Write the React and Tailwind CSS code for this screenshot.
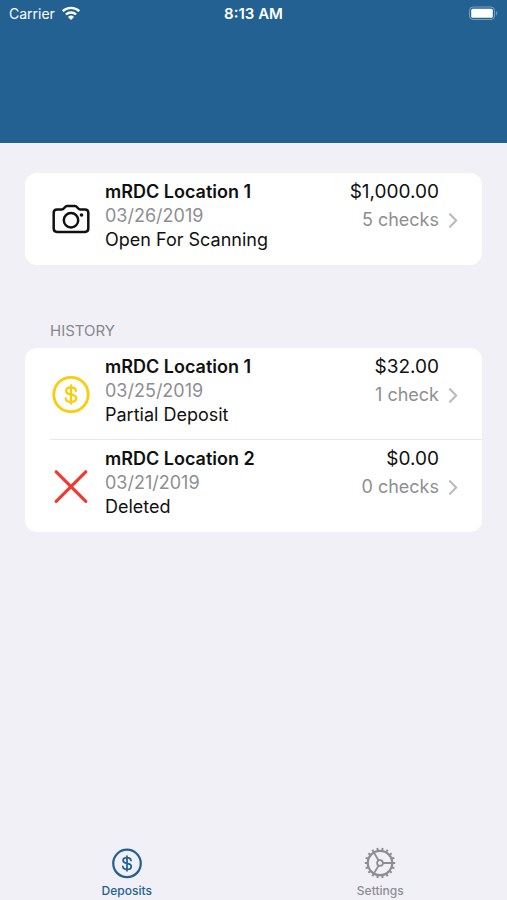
const openDeposits = [
  { id: 1, icon: 'camera', name: 'mRDC Location 1', date: '03/26/2019', status: 'Open For Scanning', amount: '$1,000.00', checks: '5 checks' },
]

const history = [
  { id: 2, icon: 'partial', name: 'mRDC Location 1', date: '03/25/2019', status: 'Partial Deposit', amount: '$32.00', checks: '1 check' },
  { id: 3, icon: 'deleted', name: 'mRDC Location 2', date: '03/21/2019', status: 'Deleted', amount: '$0.00', checks: '0 checks' },
]

function CameraIcon() {
  return (
    <svg className="size-10" viewBox="0 0 40 40" fill="none" stroke="#111" strokeWidth="2.5" strokeLinejoin="round" aria-hidden="true">
      <path d="M6 10.500h4.700c1 0 1.700-.4 2.300-1.200l.9-1.100c.6-.8 1.200-1.100 2.200-1.100h7.800c1 0 1.600.3 2.200 1.100l.9 1.100c.6.8 1.300 1.200 2.300 1.200h4.700c1.900 0 3.300 1.300 3.300 3.300v15.800c0 2-1.400 3.300-3.300 3.300H6c-1.900 0-3.300-1.300-3.300-3.300V13.800c0-2 1.400-3.300 3.300-3.300z" />
      <circle cx="20" cy="21.200" r="7.200" />
      <circle cx="30.500" cy="16" r="1.800" fill="#111" stroke="none" />
    </svg>
  )
}

function DollarIcon({ className, ringWidth }) {
  return (
    <svg className={className} viewBox="0 0 40 40" fill="none" stroke="currentColor" strokeLinecap="round" aria-hidden="true">
      <circle cx="20" cy="20.500" r="17.200" strokeWidth={ringWidth} />
      <path d="M20 11.300v18.400M25 16.900c-.3-2.200-2.200-3.500-5-3.500-2.900 0-4.900 1.400-4.900 3.600 0 1.900 1.400 2.800 3.900 3.300l2.200.5c2.700.6 4.100 1.600 4.100 3.500 0 2.300-2 3.700-5.200 3.700-3.100 0-5.100-1.400-5.400-3.700" strokeWidth="2.200" />
    </svg>
  )
}

function CrossIcon() {
  return (
    <svg className="size-10" viewBox="0 0 40 40" fill="none" stroke="#f23b30" strokeWidth="3.200" strokeLinecap="round" aria-hidden="true">
      <path d="M5.200 5.800l29.600 29.600M34.800 5.800L5.200 35.400" />
    </svg>
  )
}

function GearIcon() {
  const teeth = Array.from({ length: 18 }, (_, i) => i * 20)
  return (
    <svg className="size-8" viewBox="0 0 32 32" fill="none" stroke="currentColor" aria-hidden="true">
      <circle cx="16" cy="16" r="12.200" strokeWidth="2.200" />
      <circle cx="16" cy="16" r="2.900" strokeWidth="1.800" />
      <path d="M19 16h9M14.500 13.400L10 5.600M14.500 18.600L10 26.400" strokeWidth="1.900" />
      {teeth.map((angle) => (
        <path key={angle} d="M28.500 16h2.700" strokeWidth="2" transform={`rotate(${angle} 16 16)`} />
      ))}
    </svg>
  )
}

function WifiIcon() {
  return (
    <svg className="h-4 w-5" viewBox="0 0 20 16" fill="none" stroke="white" strokeWidth="2.400" aria-hidden="true">
      <path d="M1.700 5.200a12 12 0 0 1 16.600 0M4.900 8.500a7.400 7.400 0 0 1 10.200 0" />
      <path d="M10 14l-3-3.100a4.300 4.300 0 0 1 6 0z" fill="white" stroke="none" />
    </svg>
  )
}

function BatteryIcon() {
  return (
    <svg className="h-4 w-[30px]" viewBox="0 0 30 16" fill="none" aria-hidden="true">
      <rect x="1.500" y="1" width="25" height="12.500" rx="3.500" stroke="#7ba0bf" />
      <rect x="3.200" y="2.700" width="21.600" height="9.100" rx="1.500" fill="white" />
      <path d="M28.200 5.100c1.500.5 1.500 3.800 0 4.300z" fill="#7ba0bf" />
    </svg>
  )
}

function ChevronIcon() {
  return (
    <svg className="h-4 w-3" viewBox="0 0 12 16" fill="none" stroke="#bcbcc0" strokeWidth="2.200" strokeLinecap="round" strokeLinejoin="round" aria-hidden="true">
      <path d="M3 2.200L9.200 8.500 3 14.800" />
    </svg>
  )
}

function DepositIcon({ type }) {
  if (type === 'camera') return <CameraIcon />
  if (type === 'partial') return <DollarIcon className="size-10 text-[#fccb0a]" ringWidth="2.800" />
  return <CrossIcon />
}

function DepositList({ items }) {
  return (
    <ul className="overflow-hidden rounded-xl bg-white">
      {items.map((item, i) => (
        <li key={item.id}>
          {i > 0 && <div className="-mt-px ml-[25px] h-px bg-[#e8e8eb]" />}
          <button type="button" className="flex h-[92px] w-full items-center pl-[26px] pr-[23px] text-left">
            <DepositIcon type={item.icon} />
            <span className="ml-[14px] flex flex-1 flex-col pb-[7px] text-lg leading-6">
              <span className="font-semibold text-[#111]">{item.name}</span>
              <span className="text-[#8e8e92]">{item.date}</span>
              <span className="text-[#111]">{item.status}</span>
            </span>
            <span className="flex flex-col items-end pb-[26px] text-lg leading-7">
              <span className="mr-5 text-[19px] text-[#111]">{item.amount}</span>
              <span className="flex items-center gap-2 text-[#8e8e92]">
                {item.checks}
                <ChevronIcon />
              </span>
            </span>
          </button>
        </li>
      ))}
    </ul>
  )
}

export default function App() {
  return (
    <div className="flex min-h-screen flex-col bg-[#f1f0f6] font-['Inter',sans-serif]">
      <header className="h-[143px] bg-[#236192] text-white">
        <div className="grid h-7 grid-cols-3 items-center px-[9px] text-sm">
          <span className="flex items-center gap-[6px]">
            Carrier
            <WifiIcon />
          </span>
          <span className="text-center text-[15px] font-semibold">8:13 AM</span>
          <span className="flex justify-end">
            <BatteryIcon />
          </span>
        </div>
      </header>

      <main className="flex-1 px-[25px] pt-[30px]">
        <DepositList items={openDeposits} />
        <h2 className="mb-[7px] mt-14 pl-[25px] text-[15px] leading-5 text-[#87878c]">HISTORY</h2>
        <DepositList items={history} />
      </main>

      <nav className="flex pb-px text-xs leading-4 font-medium">
        <button type="button" className="flex flex-1 flex-col items-center gap-1 text-[#236192]">
          <DollarIcon className="size-8" ringWidth="2.800" />
          Deposits
        </button>
        <button type="button" className="flex flex-1 flex-col items-center gap-1 text-[#8e8e92]">
          <GearIcon />
          Settings
        </button>
      </nav>
    </div>
  )
}
